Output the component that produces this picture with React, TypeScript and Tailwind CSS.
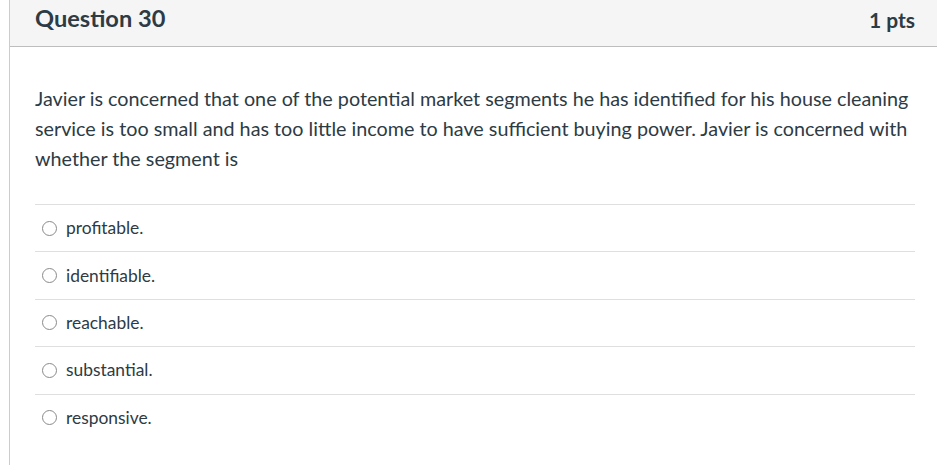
const answers = ['profitable.', 'identifiable.', 'reachable.', 'substantial.', 'responsive.']

export default function App() {
  return (
    <div className="min-h-[465px] bg-white pl-[9px] font-['Lato',sans-serif] text-[#2d3b45]">
      <div className="min-h-[465px] border-l border-[#c7cdd1]">
        <div className="flex h-[47px] items-center justify-between border-b border-[#bdbdbd] bg-[#f5f5f5] pb-[8px] pl-[25px] pr-[22px]">
          <h2 className="text-[23.6px] font-bold leading-none">Question 30</h2>
          <span className="text-[21px] font-bold leading-none">1 pts</span>
        </div>
        <div className="pl-[25px] pr-[20px] pt-[37px]">
          <p className="whitespace-nowrap text-[19.75px] leading-[30px]">
            Javier is concerned that one of the potential market segments he has identified for his house cleaning
            <br />
            service is too small and has too little income to have sufficient buying power. Javier is concerned with
            <br />
            whether the segment is
          </p>
          <div className="mt-[30px] mr-[2px]">
            {answers.map((a) => (
              <label key={a} className="flex h-[47.4px] items-center gap-[9px] border-t border-[#dfdfdf] pl-[7px]">
                <span className="h-[15px] w-[15px] rounded-full border border-[#8a8a8a] bg-white" />
                <span className="text-[17.4px]">{a}</span>
              </label>
            ))}
          </div>
        </div>
      </div>
    </div>
  )
}
